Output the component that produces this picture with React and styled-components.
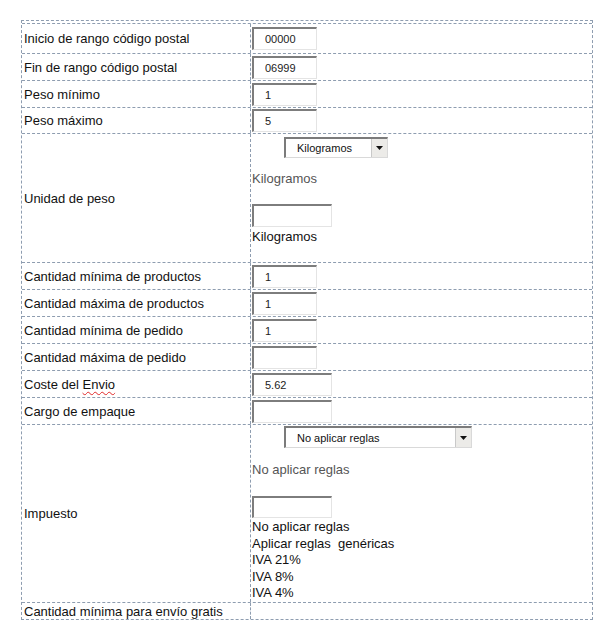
import React from "react";
import styled, { createGlobalStyle } from "styled-components";

const Global = createGlobalStyle`
  html, body { margin: 0; padding: 0; background: #fff; }
  body { font-family: "Liberation Sans", Arial, sans-serif; color: #111; }
`;

const LINE = "#8e9db0";

const Frame = styled.div`
  margin: 20px 0 0 21px;
  width: 572px;
  box-sizing: border-box;
  border: 1px dashed ${LINE};
  padding-top: 2px;
`;

const Grid = styled.div`
  border-top: 1px dashed ${LINE};
`;

const Row = styled.div`
  display: grid;
  grid-template-columns: 229px 1fr;
  height: ${(p) => p.$h}px;
  box-sizing: border-box;
  border-bottom: ${(p) => (p.$last ? "none" : `1px dashed ${LINE}`)};
`;

const Label = styled.div`
  display: flex;
  align-items: center;
  padding-left: 2px;
  border-right: 1px dashed ${LINE};
  font-size: 13px;
  color: #111;
  white-space: nowrap;
`;

const Value = styled.div`
  display: flex;
  flex-direction: column;
  align-items: flex-start;
  justify-content: ${(p) => (p.$top ? "flex-start" : "center")};
  padding-left: 1px;
`;

const Spell = styled.span`
  text-decoration: underline wavy #e02828;
  text-decoration-thickness: 1px;
  text-underline-offset: 2px;
`;

const Field = styled.input`
  width: ${(p) => p.$w}px;
  height: ${(p) => p.$h || 23}px;
  margin-top: ${(p) => p.$mt || 0}px;
  box-sizing: border-box;
  border-style: solid;
  border-width: 2px 1px 1px 2px;
  border-color: #7d7d7d #e4e4e4 #e4e4e4 #7d7d7d;
  padding: 0 0 0 11px;
  font-family: "Liberation Sans", Arial, sans-serif;
  font-size: 11px;
  color: #222;
  background: #fff;
  outline: none;
`;

const SelectBox = styled.div`
  display: flex;
  width: ${(p) => p.$w}px;
  height: ${(p) => p.$h}px;
  margin: ${(p) => p.$mt}px 0 0 32px;
  box-sizing: border-box;
  border-style: solid;
  border-width: 2px 1px 1px 2px;
  border-color: #7b7b7b #d9d9d9 #d9d9d9 #7b7b7b;
  background: #fff;
`;

const SelectText = styled.span`
  flex: 1;
  display: flex;
  align-items: center;
  padding-left: 11px;
  font-size: 11px;
  color: #111;
`;

const ArrowBtn = styled.span`
  width: 15px;
  display: flex;
  align-items: center;
  justify-content: center;
  background: #ecebe8;
  border-left: 1px solid #c9c9c9;
`;

const Note = styled.div`
  margin-top: ${(p) => p.$mt || 0}px;
  font-size: 13px;
  line-height: ${(p) => p.$lh || 15}px;
  color: ${(p) => (p.$muted ? "#555" : "#111")};
  white-space: pre;
`;

const Arrow = () => (
  <svg width="7" height="4" viewBox="0 0 7 4">
    <polygon points="0,0 7,0 3.5,4" fill="#111" />
  </svg>
);

const Select = ({ w, h, mt, text }) => (
  <SelectBox $w={w} $h={h} $mt={mt}>
    <SelectText>{text}</SelectText>
    <ArrowBtn>
      <Arrow />
    </ArrowBtn>
  </SelectBox>
);

const simple = [
  { label: "Inicio de rango código postal", v: "00000", w: 65, h: 30 },
  { label: "Fin de rango código postal", v: "06999", w: 65, h: 27 },
  { label: "Peso mínimo", v: "1", w: 65, h: 27 },
  { label: "Peso máximo", v: "5", w: 65, h: 26 },
];

const simple2 = [
  { label: "Cantidad mínima de productos", v: "1", w: 65, h: 27 },
  { label: "Cantidad máxima de productos", v: "1", w: 65, h: 27 },
  { label: "Cantidad mínima de pedido", v: "1", w: 65, h: 27 },
  { label: "Cantidad máxima de pedido", v: "", w: 65, h: 27 },
  {
    label: (
      <>
        Coste del&nbsp;<Spell>Envio</Spell>
      </>
    ),
    v: "5.62",
    w: 80,
    h: 27,
  },
  { label: "Cargo de empaque", v: "", w: 80, h: 27 },
];

const InputRow = ({ label, v, w, h }) => (
  <Row $h={h}>
    <Label>{label}</Label>
    <Value>
      <Field $w={w} value={v} readOnly />
    </Value>
  </Row>
);

export default function App() {
  return (
    <>
      <Global />
      <Frame>
        <Grid>
          {simple.map((r, i) => (
            <InputRow key={i} {...r} />
          ))}
          <Row $h={129}>
            <Label>Unidad de peso</Label>
            <Value $top>
              <Select w={104} h={21} mt={3} text="Kilogramos" />
              <Note $muted $mt={13}>Kilogramos</Note>
              <Field $w={80} $mt={18} value="" readOnly />
              <Note $mt={2} $lh={16}>Kilogramos</Note>
            </Value>
          </Row>
          {simple2.map((r, i) => (
            <InputRow key={i} {...r} />
          ))}
          <Row $h={178}>
            <Label>Impuesto</Label>
            <Value $top>
              <Select w={188} h={22} mt={1} text="No aplicar reglas" />
              <Note $muted $mt={14}>No aplicar reglas</Note>
              <Field $w={80} $h={22} $mt={19} value="" readOnly />
              <Note $mt={1} $lh={16.5}>
                {"No aplicar reglas\nAplicar reglas  genéricas\nIVA 21%\nIVA 8%\nIVA 4%"}
              </Note>
            </Value>
          </Row>
          <Row $h={16} $last>
            <Label>Cantidad mínima para envío gratis</Label>
            <Value />
          </Row>
        </Grid>
      </Frame>
    </>
  );
}
